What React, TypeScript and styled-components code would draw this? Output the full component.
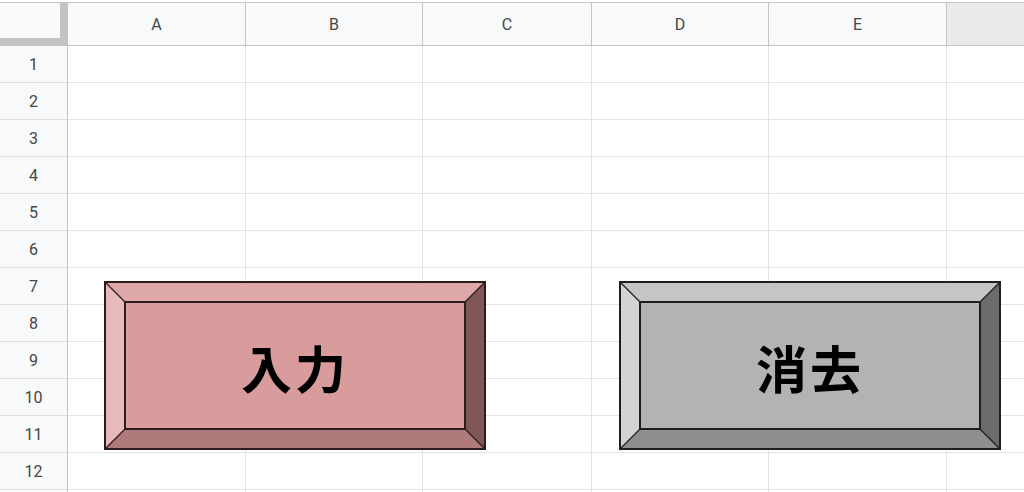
import React, { FC } from 'react';
import { createGlobalStyle, styled } from 'styled-components';

const GlobalStyle = createGlobalStyle`
  html, body {
    margin: 0;
    padding: 0;
    background: #ffffff;
    overflow: hidden;
  }
  body {
    font-family: Roboto, "Liberation Sans", Arial, sans-serif;
  }
`;

const COLUMNS = [
  { label: 'A', width: 178 },
  { label: 'B', width: 177 },
  { label: 'C', width: 169 },
  { label: 'D', width: 177 },
  { label: 'E', width: 178 },
  { label: '', width: 0 },
];

const ROW_COUNT = 12;

const Page = styled.div`
  position: relative;
  width: 1024px;
  height: 492px;
  padding-top: 2px;
  box-sizing: border-box;
  overflow: hidden;
`;

const Sheet = styled.div`
  display: grid;
  grid-template-columns: 68px 178px 177px 169px 177px 178px 1fr;
  grid-auto-rows: 37px;
  grid-template-rows: 44px;
`;

const Corner = styled.div`
  background: #f8f9fa;
  border-top: 1px solid #c7c7c7;
  box-shadow: inset -8px -8px 0 #c2c2c2;
`;

const ColHeader = styled.div<{ $blank?: boolean }>`
  display: flex;
  align-items: center;
  justify-content: center;
  background: ${(p) => (p.$blank ? '#e9eaec' : '#f8f9fa')};
  border-top: 1px solid #c7c7c7;
  border-bottom: 1px solid #c4c4c4;
  border-right: ${(p) => (p.$blank ? 'none' : '1px solid #c4c4c4')};
  color: #444746;
  font-size: 16px;
  padding-top: 1px;
`;

const RowHeader = styled.div`
  display: flex;
  align-items: center;
  justify-content: center;
  background: #f8f9fa;
  border-right: 1px solid #c4c4c4;
  border-bottom: 1px solid #dedede;
  color: #444746;
  font-size: 16px;
`;

const Cell = styled.div<{ $last?: boolean }>`
  background: #ffffff;
  border-bottom: 1px solid #e2e3e3;
  border-right: ${(p) => (p.$last ? 'none' : '1px solid #e2e3e3')};
`;

interface BevelColors {
  face: string;
  top: string;
  left: string;
  right: string;
  bottom: string;
  stroke: string;
}

const RED: BevelColors = {
  face: '#d99c9c',
  top: '#dfa8a8',
  left: '#e8baba',
  right: '#7f5757',
  bottom: '#b07a7a',
  stroke: '#2e1c1c',
};

const GRAY: BevelColors = {
  face: '#b3b3b3',
  top: '#c5c5c5',
  left: '#d3d3d3',
  right: '#6c6c6c',
  bottom: '#8e8e8e',
  stroke: '#1f1f1f',
};

// drawings float over the cells, like an inserted shape in the sheet
const ShapeButton = styled.div<{ $left: number }>`
  position: absolute;
  top: 281px;
  left: ${(p) => p.$left}px;
  width: 382px;
  height: 169px;
  display: flex;
  align-items: center;
  justify-content: center;
  cursor: pointer;
`;

const BevelArt = styled.svg`
  position: absolute;
  inset: 0;
`;

const ButtonLabel = styled.span`
  position: relative;
  font-family: "Noto Sans CJK JP", "Noto Sans", sans-serif;
  font-weight: 700;
  font-size: 51px;
  line-height: 1;
  color: #000000;
  letter-spacing: 3px;
  margin-top: 4px;
`;

const W = 382;
const H = 169;
const B = 21;

const Bevel: FC<{ colors: BevelColors }> = ({ colors }) => (
  <BevelArt width={W} height={H} viewBox={`0 0 ${W} ${H}`}>
    <polygon points={`0,0 ${W},0 ${W - B},${B} ${B},${B}`} fill={colors.top} />
    <polygon points={`0,0 ${B},${B} ${B},${H - B} 0,${H}`} fill={colors.left} />
    <polygon points={`${W},0 ${W},${H} ${W - B},${H - B} ${W - B},${B}`} fill={colors.right} />
    <polygon points={`0,${H} ${B},${H - B} ${W - B},${H - B} ${W},${H}`} fill={colors.bottom} />
    <rect x={B} y={B} width={W - 2 * B} height={H - 2 * B} fill={colors.face} stroke={colors.stroke} strokeWidth={2} />
    <g stroke={colors.stroke} strokeWidth={1.3}>
      <line x1={1} y1={1} x2={B} y2={B} />
      <line x1={W - 1} y1={1} x2={W - B} y2={B} />
      <line x1={1} y1={H - 1} x2={B} y2={H - B} />
      <line x1={W - 1} y1={H - 1} x2={W - B} y2={H - B} />
    </g>
    <rect x={1} y={1} width={W - 2} height={H - 2} fill="none" stroke={colors.stroke} strokeWidth={2} />
  </BevelArt>
);

const App: FC = () => {
  const rows = Array.from({ length: ROW_COUNT }, (_, i) => i + 1);

  return (
    <Page>
      <GlobalStyle />
      <Sheet>
        <Corner />
        {COLUMNS.map((c, i) => (
          <ColHeader key={`h${i}`} $blank={!c.label}>
            {c.label}
          </ColHeader>
        ))}
        {rows.map((r) => (
          <React.Fragment key={r}>
            <RowHeader>{r}</RowHeader>
            {COLUMNS.map((c, i) => (
              <Cell key={i} $last={i === COLUMNS.length - 1} />
            ))}
          </React.Fragment>
        ))}
        <RowHeader />
        {COLUMNS.map((c, i) => (
          <Cell key={`x${i}`} $last={i === COLUMNS.length - 1} />
        ))}
      </Sheet>

      <ShapeButton $left={104}>
        <Bevel colors={RED} />
        <ButtonLabel>入力</ButtonLabel>
      </ShapeButton>
      <ShapeButton $left={619}>
        <Bevel colors={GRAY} />
        <ButtonLabel>消去</ButtonLabel>
      </ShapeButton>
    </Page>
  );
};

export default App;
